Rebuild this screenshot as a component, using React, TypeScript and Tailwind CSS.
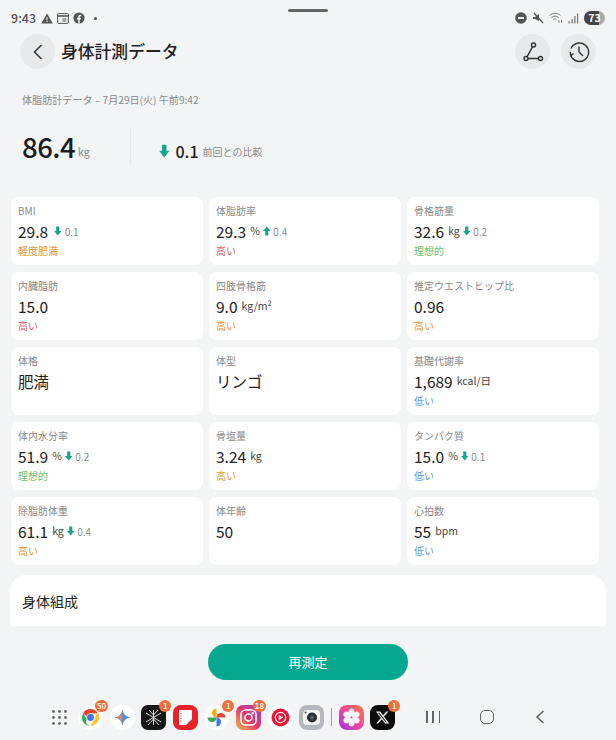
import type { ReactNode } from 'react';

const GRAY = 'text-[#8a8a8a]';

type Metric = {
  label: string;
  value: string;
  unit?: string;
  dir?: 'up' | 'down';
  delta?: string;
  status?: string;
  color?: string;
};

const ORANGE = 'text-[#e8963c]';
const RED = 'text-[#d9626a]';
const GREEN = 'text-[#6cc070]';
const BLUE = 'text-[#5f9fe0]';

const metrics: Metric[] = [
  { label: 'BMI', value: '29.8', dir: 'down', delta: '0.1', status: '軽度肥満', color: ORANGE },
  { label: '体脂肪率', value: '29.3', unit: '%', dir: 'up', delta: '0.4', status: '高い', color: RED },
  { label: '骨格筋量', value: '32.6', unit: 'kg', dir: 'down', delta: '0.2', status: '理想的', color: GREEN },
  { label: '内臓脂肪', value: '15.0', status: '高い', color: RED },
  { label: '四肢骨格筋', value: '9.0', unit: 'kg/m²', status: '高い', color: ORANGE },
  { label: '推定ウエストヒップ比', value: '0.96', status: '高い', color: ORANGE },
  { label: '体格', value: '肥満' },
  { label: '体型', value: 'リンゴ' },
  { label: '基礎代謝率', value: '1,689', unit: 'kcal/日', status: '低い', color: BLUE },
  { label: '体内水分率', value: '51.9', unit: '%', dir: 'down', delta: '0.2', status: '理想的', color: GREEN },
  { label: '骨塩量', value: '3.24', unit: 'kg', status: '高い', color: ORANGE },
  { label: 'タンパク質', value: '15.0', unit: '%', dir: 'down', delta: '0.1', status: '低い', color: BLUE },
  { label: '除脂肪体重', value: '61.1', unit: 'kg', dir: 'down', delta: '0.4', status: '高い', color: ORANGE },
  { label: '体年齢', value: '50' },
  { label: '心拍数', value: '55', unit: 'bpm', status: '低い', color: BLUE },
];

function Arrow({ dir, size = 10 }: { dir: 'up' | 'down'; size?: number }) {
  return (
    <svg width={size * 0.75} height={size} viewBox="0 0 7.5 10" className={dir === 'up' ? 'rotate-180' : ''}>
      <path d="M2.2 0.5h3.1v4.4h2.1L3.75 9.6 0.1 4.9h2.1z" fill="#12a58c" />
    </svg>
  );
}

function Card({ m }: { m: Metric }) {
  return (
    <div className="h-[68px] rounded-[8px] bg-white pl-[7px] pt-[7px]">
      <div className={`text-[10px] leading-[14px] ${GRAY}`}>{m.label}</div>
      <div className="mt-[2px] flex h-[22px] items-center">
        <span className="text-[15.5px] leading-[22px] text-[#222]">{m.value}</span>
        {m.unit && <span className="mb-[1px] ml-[4px] text-[10.5px] leading-[14px] text-[#444]">{m.unit}</span>}
        {m.dir && (
          <span className={`mr-[3px] flex ${m.unit ? 'ml-[3px]' : 'ml-[6px]'}`}>
            <Arrow dir={m.dir} />
          </span>
        )}
        {m.delta && <span className={`text-[10px] ${GRAY}`}>{m.delta}</span>}
      </div>
      {m.status && <div className={`mt-[2px] text-[10px] leading-[14px] ${m.color}`}>{m.status}</div>}
    </div>
  );
}

function RoundBtn({ children }: { children: ReactNode }) {
  return <div className="flex h-[35px] w-[35px] items-center justify-center rounded-full bg-[#e8e9eb]">{children}</div>;
}

function Badge({ n }: { n: string }) {
  return (
    <span className="absolute -right-[5px] -top-[5px] flex h-[12px] min-w-[12px] items-center justify-center rounded-full bg-[#f0703a] px-[2px] text-[8px] font-medium leading-none text-white">
      {n}
    </span>
  );
}

function DockIcon({ children, badge }: { children: ReactNode; badge?: string }) {
  return (
    <div className="relative h-[25px] w-[25px] shrink-0">
      {children}
      {badge && <Badge n={badge} />}
    </div>
  );
}

function StatusBar() {
  return (
    <div className="relative flex h-[34px] shrink-0 items-center justify-between pl-[11px] pr-[11px] pt-[2px]">
      <div className="flex items-center gap-[4px]">
        <span className="mr-[1px] text-[12.5px] font-medium text-[#555]">9:43</span>
        <svg width="12" height="11" viewBox="0 0 12 11">
          <path d="M6 0.5 11.8 10.5H0.2z" fill="#555" />
          <path d="M5.5 4h1v3.5h-1zM5.5 8h1v1h-1z" fill="#f2f4f6" />
        </svg>
        <svg width="12" height="11" viewBox="0 0 12 11" fill="none" stroke="#555">
          <rect x="0.6" y="0.6" width="10.8" height="9.8" rx="1" />
          <path d="M0.6 3h10.8" strokeWidth="1.6" />
          <path d="M5.5 6h4M5.5 8h4" />
        </svg>
        <svg width="12" height="12" viewBox="0 0 12 12">
          <circle cx="6" cy="6" r="5.6" fill="#555" />
          <path d="M5.2 11.5V7.4H3.9V5.8h1.3V4.7c0-1.3.8-2 2-2l1 .1v1.4h-.7c-.6 0-.8.3-.8.8v.8h1.4l-.2 1.6H6.7v4.1z" fill="#f2f4f6" />
        </svg>
        <span className="ml-[5px] h-[3px] w-[3px] rounded-full bg-[#555]" />
      </div>
      <div className="absolute left-[288px] top-[9px] h-[3px] w-[40px] rounded-full bg-[#666]" />
      <div className="flex items-center gap-[5px]">
        <svg width="12" height="12" viewBox="0 0 12 12">
          <circle cx="6" cy="6" r="5.8" fill="#555" />
          <rect x="3" y="5" width="6" height="2" fill="#f2f4f6" />
        </svg>
        <svg width="12" height="12" viewBox="0 0 12 12">
          <path d="M1 5h2l4-3v7L3 7H1z" fill="#555" />
          <path d="M2 1l9 10" stroke="#555" strokeWidth="1.3" />
        </svg>
        <svg width="14" height="12" viewBox="0 0 14 12" fill="none" stroke="#777" strokeWidth="0.9">
          <path d="M0.5 3.5C3.5 0.5 8.5 0.5 11.5 3.5M2.5 5.5C4.5 3.7 7.5 3.7 9.5 5.5M4.5 7.5C5.5 6.8 6.5 6.8 7.5 7.5" />
          <path d="M10 8v3M12.5 8v3" />
        </svg>
        <svg width="11" height="11" viewBox="0 0 11 11" fill="#777">
          <rect x="0.5" y="8" width="1.2" height="2.5" />
          <rect x="3.5" y="6" width="1.2" height="4.5" />
          <rect x="6.3" y="3" width="1.2" height="7.5" />
          <rect x="9" y="0.5" width="1.2" height="10" />
        </svg>
        <span className="relative flex h-[14px] w-[21px] items-center justify-center overflow-hidden rounded-full bg-[#aaa] text-[10.5px] font-semibold leading-none text-white">
          <span className="absolute inset-y-0 left-0 w-[15px] bg-[#444]" />
          <span className="relative">73</span>
        </span>
      </div>
    </div>
  );
}

function Dock() {
  return (
    <div className="flex h-[44px] shrink-0 items-center pl-[52px]">
      <svg width="15" height="15" viewBox="0 0 15 15" fill="#666">
        {[1.5, 7.5, 13.5].map(y =>
          [1.5, 7.5, 13.5].map(x => <circle key={`${x}-${y}`} cx={x} cy={y} r="1.4" />),
        )}
      </svg>
      <div className="ml-[11px] flex items-center gap-[6.6px]">
        <DockIcon badge="50">
          <svg viewBox="0 0 25 25" className="h-full w-full">
            <circle cx="12.5" cy="12.5" r="12.5" fill="#fff" />
            <path d="M12.5 4a8.5 8.5 0 0 1 7.4 4.3h-7.4a4.2 4.2 0 0 0-4 3L5.1 8.2A8.5 8.5 0 0 1 12.5 4z" fill="#e2432f" />
            <path d="M19.9 8.3a8.5 8.5 0 0 1-7.6 12.7l3.9-6.2a4.2 4.2 0 0 0 .1-6.5z" fill="#f7c52d" />
            <path d="M5.1 8.2l3.6 6.4a4.2 4.2 0 0 0 3.6 6.4A8.5 8.5 0 0 1 5.1 8.2z" fill="#3aa757" />
            <circle cx="12.5" cy="12.5" r="3.4" fill="#3b78e7" />
          </svg>
        </DockIcon>
        <DockIcon>
          <svg viewBox="0 0 25 25" className="h-full w-full">
            <circle cx="12.5" cy="12.5" r="12.5" fill="#fff" />
            <path d="M12.5 4C13 9 16 12 21 12.5 16 13 13 16 12.5 21 12 16 9 13 4 12.5 9 12 12 9 12.5 4z" fill="#4a8ce8" />
            <path d="M12.5 4C12 9 9 12 4 12.5 9 13 12 16 12.5 21z" fill="#e8885a" opacity="0.8" />
          </svg>
        </DockIcon>
        <DockIcon badge="1">
          <svg viewBox="0 0 25 25" className="h-full w-full">
            <rect width="25" height="25" rx="7" fill="#161616" />
            <path d="M12.5 5v15M5 8l15 9M20 8L5 17M8 5l4.5 5 4.5-5M7 20l5.5-6 5.5 6" stroke="#ddd" strokeWidth="1" fill="none" />
          </svg>
        </DockIcon>
        <DockIcon>
          <svg viewBox="0 0 25 25" className="h-full w-full">
            <rect width="25" height="25" rx="8" fill="#e8202a" />
            <path d="M7 5h11a1 1 0 0 1 1 1v8l-6 6H7a1 1 0 0 1-1-1V6a1 1 0 0 1 1-1z" fill="#fff" />
            <path d="M8 8v9" stroke="#e8202a" strokeWidth="1" strokeDasharray="1 1.5" />
          </svg>
        </DockIcon>
        <DockIcon badge="1">
          <svg viewBox="0 0 25 25" className="h-full w-full">
            <circle cx="12.5" cy="12.5" r="12.5" fill="#fff" />
            <path d="M12.5 12.5V3.5a4.5 4.5 0 0 0-4.5 4.5 4.5 4.5 0 0 0 4.5 4.5z" fill="#f5b400" />
            <path d="M12.5 12.5h9a4.5 4.5 0 0 0-4.5-4.5 4.5 4.5 0 0 0-4.5 4.5z" fill="#e8432f" />
            <path d="M12.5 12.5v9a4.5 4.5 0 0 0 4.5-4.5 4.5 4.5 0 0 0-4.5-4.5z" fill="#3b78e7" />
            <path d="M12.5 12.5h-9a4.5 4.5 0 0 0 4.5 4.5 4.5 4.5 0 0 0 4.5-4.5z" fill="#34a853" />
          </svg>
        </DockIcon>
        <DockIcon badge="18">
          <div className="flex h-full w-full items-center justify-center rounded-[7px] bg-gradient-to-tr from-[#f9b233] via-[#e1306c] to-[#8a3ac8]">
            <svg width="17" height="17" viewBox="0 0 17 17" fill="none" stroke="#fff" strokeWidth="1.6">
              <rect x="1" y="1" width="15" height="15" rx="4.5" />
              <circle cx="8.5" cy="8.5" r="3.5" />
              <circle cx="12.8" cy="4.2" r="0.5" fill="#fff" />
            </svg>
          </div>
        </DockIcon>
        <DockIcon>
          <svg viewBox="0 0 25 25" className="h-full w-full">
            <circle cx="12.5" cy="12.5" r="12.5" fill="#fff" />
            <circle cx="12.5" cy="12.5" r="9" fill="#ee1133" />
            <circle cx="12.5" cy="12.5" r="5.2" fill="none" stroke="#fff" strokeWidth="1.2" />
            <path d="M10.8 9.8l4.4 2.7-4.4 2.7z" fill="#fff" />
          </svg>
        </DockIcon>
        <DockIcon>
          <svg viewBox="0 0 25 25" className="h-full w-full">
            <rect width="25" height="25" rx="8" fill="#b4b8bc" />
            <rect x="4" y="5" width="17" height="15" rx="4" fill="#f4f4f4" />
            <circle cx="13" cy="12.5" r="5" fill="#2c2f33" />
            <circle cx="13" cy="12.5" r="2" fill="#5a6068" />
            <circle cx="6.5" cy="7.5" r="0.9" fill="#444" />
          </svg>
        </DockIcon>
      </div>
      <div className="mx-[7px] h-[18px] w-px bg-[#9a9ea2]" />
      <div className="flex items-center gap-[6px]">
        <DockIcon>
          <div className="flex h-full w-full items-center justify-center rounded-[8px] bg-gradient-to-tr from-[#a020e0] via-[#f0459a] to-[#f97a2a]">
            <svg width="19" height="19" viewBox="0 0 19 19" fill="#fff">
              {[0, 60, 120, 180, 240, 300].map(a => (
                <ellipse key={a} cx="9.5" cy="4.6" rx="3" ry="4" transform={`rotate(${a} 9.5 9.5)`} opacity="0.92" />
              ))}
            </svg>
          </div>
        </DockIcon>
        <DockIcon badge="1">
          <div className="flex h-full w-full items-center justify-center rounded-[8px] bg-[#0c0c0c]">
            <svg width="15" height="15" viewBox="0 0 24 24" fill="#eee">
              <path d="M18.2 2.3h3.3l-7.2 8.2L22.8 21.7h-6.6l-5.2-6.8-5.9 6.8H1.8l7.7-8.8L1.4 2.3h6.8l4.7 6.2zm-1.2 17.4h1.8L7 4.2H5z" />
            </svg>
          </div>
        </DockIcon>
      </div>
      <div className="ml-[31px] flex h-[12px] w-[14px] items-stretch justify-between">
        <span className="w-[1.6px] bg-[#666]" />
        <span className="w-[1.6px] bg-[#666]" />
        <span className="w-[1.6px] bg-[#666]" />
      </div>
      <div className="ml-[40px] h-[14px] w-[14px] rounded-[5px] border-[1.6px] border-[#666]" />
      <svg className="ml-[41px]" width="10" height="14" viewBox="0 0 10 14" fill="none" stroke="#666" strokeWidth="1.6">
        <path d="M8.5 1 2 7l6.5 6" />
      </svg>
    </div>
  );
}

export default function App() {
  return (
    <div className="flex h-[740px] w-[616px] flex-col overflow-hidden bg-[#f2f4f6] font-['Noto_Sans_CJK_JP','Noto_Sans',sans-serif]">
      <StatusBar />

      <div className="flex h-[35px] shrink-0 items-center pl-[20px] pr-[20px]">
        <RoundBtn>
          <svg width="10" height="16" viewBox="0 0 10 16" fill="none" stroke="#333" strokeWidth="1.5">
            <path d="M8.5 1 1.5 8l7 7" />
          </svg>
        </RoundBtn>
        <div className="ml-[6px] text-[16.8px] font-medium text-[#222]">身体計測データ</div>
        <div className="ml-auto flex gap-[11px]">
          <RoundBtn>
            <svg width="22" height="22" viewBox="0 0 22 22" fill="none" stroke="#333" strokeWidth="1.4">
              <circle cx="11.5" cy="4" r="2" />
              <circle cx="4" cy="17.5" r="2" />
              <circle cx="18.5" cy="17.5" r="2" />
              <path d="M10.5 5.8 5 15.8M6 17.5h10.5" />
            </svg>
          </RoundBtn>
          <RoundBtn>
            <svg width="22" height="22" viewBox="0 0 22 22" fill="none" stroke="#333" strokeWidth="1.4">
              <path d="M2.5 13.5A9.2 9.2 0 1 0 3 7.5" />
              <path d="M2.2 11 3 14.4l2.6-1.9" />
              <path d="M11 5.5V11l4 4" />
            </svg>
          </RoundBtn>
        </div>
      </div>

      <div className={`ml-[22px] mt-[23px] h-[16px] shrink-0 text-[10.1px] leading-[16px] ${GRAY}`}>
        体脂肪計データ – 7月29日(火) 午前9:42
      </div>

      <div className="ml-[22px] mt-[21px] flex h-[36px] shrink-0 items-center">
        <span className="w-[56px] text-[27.5px] font-medium tracking-[-0.5px] text-[#1c1c1c]">86.4</span>
        <span className={`mt-[9px] w-[52px] text-[10.5px] ${GRAY}`}>kg</span>
        <div className="h-[36px] w-px bg-[#e6e7e9]" />
        <div className="ml-[28px] mt-[8px] flex items-center">
          <Arrow dir="down" size={14} />
          <span className="ml-[6px] text-[16px] font-medium text-[#222]">0.1</span>
          <span className={`ml-[4px] mt-[1px] text-[10px] ${GRAY}`}>前回との比較</span>
        </div>
      </div>

      <div className="ml-[11px] mt-[32px] grid h-[367px] w-[588px] shrink-0 grid-cols-3 gap-x-[6px] gap-y-[7px]">
        {metrics.map(m => (
          <Card key={m.label} m={m} />
        ))}
      </div>

      <div className="mx-[10px] mt-[11px] h-[51px] shrink-0 rounded-t-[16px] bg-white pl-[12px] pt-[16px] text-[14px] leading-[20px] text-[#222]">
        身体組成
      </div>

      <div className="mt-[18px] flex shrink-0 justify-center">
        <div className="flex h-[36px] w-[200px] items-center justify-center rounded-full bg-[#05a78f] text-[13px] text-white">
          再測定
        </div>
      </div>

      <div className="mt-[15px]">
        <Dock />
      </div>
    </div>
  );
}
